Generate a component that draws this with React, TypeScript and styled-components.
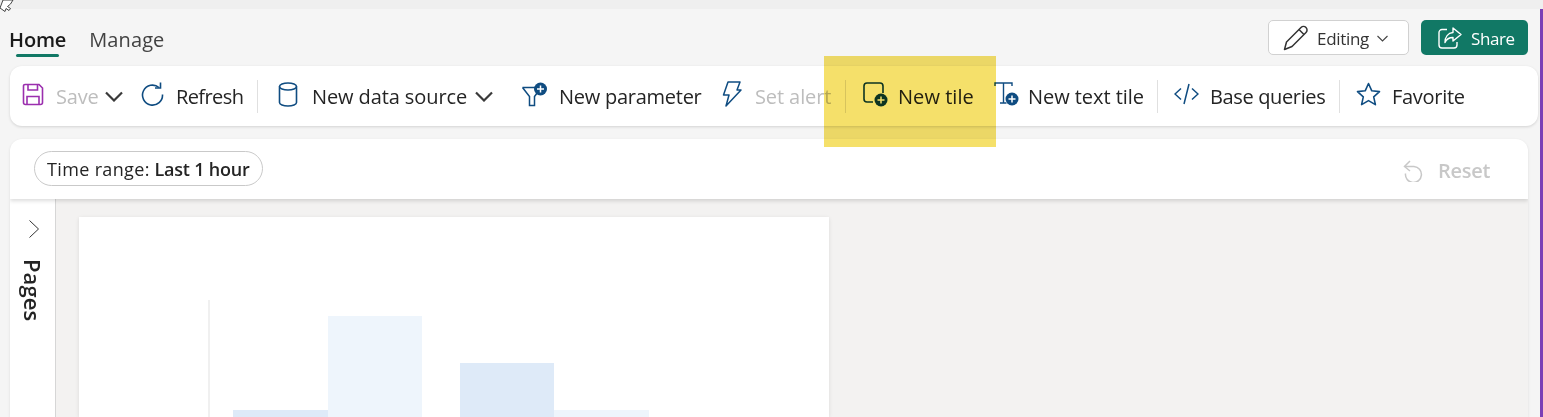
import React from 'react';
import styled, { createGlobalStyle } from 'styled-components';

const Global = createGlobalStyle`
    html, body {
        margin: 0;
        padding: 0;
        height: 100%;
        overflow: hidden;
    }
    body {
        font-family: "Open Sans", "Noto Sans", sans-serif;
    }
`;

const blue = '#0f4c81';

const SaveIcon = () => (
    <svg width="22" height="23" viewBox="0 0 22 23" fill="none" stroke="#9b2fae" strokeWidth="1.6">
        <path d="M3 1.5h14l3.5 3.500v14.500a2 2 0 0 1-2 2H3.500a2 2 0 0 1-2-2V3a1.500 1.500 0 0 1 1.500-1.500z" />
        <path d="M6 1.500v5.500h9.500V1.500M5 21.500v-8h12v8" />
    </svg>
);

const RefreshIcon = () => (
    <svg width="23" height="24" viewBox="0 0 23 24" fill="none" stroke={blue} strokeWidth="1.6">
        <path d="M18 5.500A10 10 0 1 0 21.500 12.500" />
        <path d="M19.500 0.500v5.500h-5.500" />
    </svg>
);

const DatabaseIcon = () => (
    <svg width="20" height="25" viewBox="0 0 20 25" fill="none" stroke={blue} strokeWidth="1.6">
        <ellipse cx="10" cy="4.500" rx="8.500" ry="3.500" />
        <path d="M1.500 4.500v16c0 2 3.800 3.500 8.500 3.500s8.500-1.500 8.500-3.500v-16" />
    </svg>
);

const FilterIcon = () => (
    <svg width="27" height="25" viewBox="0 0 27 25">
        <path d="M1.500 5.500h13M1.500 5.500l7 9v9h5v-9l3-4" fill="none" stroke={blue} strokeWidth="1.500" />
        <circle cx="19.500" cy="7" r="6.500" fill={blue} />
        <path d="M19.500 3.500v7M16 7h7" stroke="#fff" strokeWidth="1.500" />
    </svg>
);

const BoltIcon = () => (
    <svg width="20" height="26" viewBox="0 0 20 26" fill="none" stroke={blue} strokeWidth="1.500" strokeLinejoin="round">
        <path d="M6 1h12l-3 8h4L4 25l3-11H1.500z" />
    </svg>
);

const TileIcon = () => (
    <svg width="25" height="25" viewBox="0 0 25 25">
        <path d="M10 20H4a3 3 0 0 1-3-3V4a3 3 0 0 1 3-3h13a3 3 0 0 1 3 3v7" fill="none" stroke="#0d3b4f" strokeWidth="1.600" />
        <circle cx="18" cy="18" r="6.500" fill="#0d3b4f" />
        <path d="M18 14.500v7M14.500 18h7" stroke="#fff" strokeWidth="1.500" />
    </svg>
);

const TextTileIcon = () => (
    <svg width="25" height="24" viewBox="0 0 25 24">
        <path d="M1 4V1h17v3M9.500 1v20H6M9.500 21h3" fill="none" stroke={blue} strokeWidth="1.400" />
        <circle cx="18" cy="17" r="6.500" fill={blue} />
        <path d="M18 13.500v7M14.500 17h7" stroke="#fff" strokeWidth="1.500" />
    </svg>
);

const CodeIcon = () => (
    <svg width="25" height="22" viewBox="0 0 25 22" fill="none" stroke={blue} strokeWidth="1.500">
        <path d="M7 5.500L1 11l6 5.500M18 5.500l6 5.500-6 5.500M15 1l-5 20" />
    </svg>
);

const StarIcon = () => (
    <svg width="25" height="25" viewBox="0 0 25 25" fill="none" stroke={blue} strokeWidth="1.600" strokeLinejoin="round">
        <path d="M12.500 1.500l3.300 7.300 7.700.8-5.800 5.200 1.700 7.800-6.900-4-6.900 4 1.700-7.800L1.500 9.600l7.700-.8z" />
    </svg>
);

const PencilIcon = () => (
    <svg width="26" height="26" viewBox="0 0 26 26" fill="none" stroke="#333" strokeWidth="1.500" strokeLinejoin="round">
        <path d="M1.500 24.500l2-7.500L18 2.500a3 3 0 0 1 5 5L9 21.500z" />
        <path d="M16 4.500l5 5" />
    </svg>
);

const ShareIcon = () => (
    <svg width="24" height="22" viewBox="0 0 24 22" fill="none" stroke="#fff" strokeWidth="1.400" strokeLinejoin="round">
        <path d="M9 2.500H4a3 3 0 0 0-3 3V18a3 3 0 0 0 3 3h12a3 3 0 0 0 3-3v-3" />
        <path d="M15 1l8 6.500-8 6.500v-3.500c-4 0-6.500 1.500-8 5 0-5.500 3-9.500 8-10z" />
    </svg>
);

const ResetIcon = () => (
    <svg width="22" height="22" viewBox="0 0 22 22" fill="none" stroke="#c8c8c8" strokeWidth="1.500">
        <path d="M3 6.500h9a8 8 0 1 1-8.500 7" />
        <path d="M8 1L2.500 6.500 8 11" />
    </svg>
);

const CursorIcon = () => (
    <svg width="16" height="12" viewBox="0 0 16 12" fill="#fff" stroke="#333" strokeWidth="0.900">
        <path d="M0 8l5 3.500 1-3 3 2 1.500-2-3-2 3-2.500L13 0H3z" />
    </svg>
);

const CaretIcon = () => (
    <svg width="18" height="11" viewBox="0 0 18 11" fill="none" stroke="#3a3a3a" strokeWidth="2.200">
        <path d="M1 1.500l8 8 8-8" />
    </svg>
);

const SmallCaretIcon = () => (
    <svg width="11" height="7" viewBox="0 0 11 7" fill="none" stroke="#444" strokeWidth="1.100">
        <path d="M.5 1l5 5 5-5" />
    </svg>
);

const PanelCaretIcon = () => (
    <svg width="10" height="18" viewBox="0 0 10 18" fill="none" stroke="#333" strokeWidth="1">
        <path d="M.5.500L9.500 9 .5 17.500" />
    </svg>
);

const tools = [
    { icon: <SaveIcon />, label: 'Save', muted: true, caret: 6, left: 12, gap: 13, width: 42, track: -0.2 },
    { icon: <RefreshIcon />, label: 'Refresh', left: 18, gap: 13, width: 67, track: -0.6, sep: true },
    { icon: <DatabaseIcon />, label: 'New data source', caret: 8, left: 20, gap: 15, width: 154, track: -0.1 },
    { icon: <FilterIcon />, label: 'New parameter', left: 28, gap: 12, width: 142, track: -0.26 },
    { icon: <BoltIcon />, label: 'Set alert', muted: true, left: 20, gap: 14, width: 76, track: -0.1, sep: true },
    { icon: <TileIcon />, label: 'New tile', left: 17, gap: 11, width: 75, track: 0.05 },
    { icon: <TextTileIcon />, label: 'New text tile', left: 20, gap: 10, width: 115, track: -0.05, sep: true },
    { icon: <CodeIcon />, label: 'Base queries', left: 16, gap: 12, width: 115, track: -0.36, sep: true },
    { icon: <StarIcon />, label: 'Favorite', left: 16, gap: 12, width: 72, track: -0.3 },
];

const App = () => (
    <Page>
        <Global />
        <Pointer><CursorIcon /></Pointer>
        <TopStrip />
        <TabRow>
            <Tabs>
                <Tab $active $track={-0.15}>Home</Tab>
                <Tab $track={0.1}>Manage</Tab>
            </Tabs>
            <Actions>
                <EditingButton>
                    <PencilIcon />
                    <span>Editing</span>
                    <SmallCaretIcon />
                </EditingButton>
                <ShareButton>
                    <ShareIcon />
                    <span>Share</span>
                </ShareButton>
            </Actions>
        </TabRow>
        <Toolbar>
            {tools.map((t) => (
                <React.Fragment key={t.label}>
                    <Tool $left={t.left} $gap={t.gap}>
                        <IconSlot>{t.icon}</IconSlot>
                        <ToolLabel $muted={t.muted} $width={t.width} $track={t.track}>{t.label}</ToolLabel>
                    </Tool>
                    {t.caret && <Caret $left={t.caret}><CaretIcon /></Caret>}
                    {t.sep && <Separator />}
                </React.Fragment>
            ))}
        </Toolbar>
        <Card>
            <CardHeader>
                <TimePill><span>Time range:</span>&nbsp;<b>Last 1 hour</b></TimePill>
                <ResetButton>
                    <ResetIcon />
                    <span>Reset</span>
                </ResetButton>
            </CardHeader>
            <CardBody>
                <Sidebar>
                    <PanelCaretIcon />
                    <PagesLabel>Pages</PagesLabel>
                </Sidebar>
                <Canvas>
                    <Tile>
                        <Chart>
                            <Bar $h={7} $tone="#deeaf8" />
                            <Bar $h={101} $tone="#eef5fc" />
                            <BarGap />
                            <Bar $h={54} $tone="#deeaf8" />
                            <Bar $h={7} $tone="#eef5fc" />
                        </Chart>
                    </Tile>
                </Canvas>
            </CardBody>
        </Card>
        <Highlight />
        <EdgeLine />
    </Page>
);

export default App;

const Page = styled.div`
    position: relative;
    width: 1543px;
    height: 417px;
    overflow: hidden;
    background: #f5f5f5;
    color: #242424;
`;

const Pointer = styled.div`
    position: absolute;
    top: 0;
    left: 0;
    line-height: 0;
`;

const TopStrip = styled.div`
    height: 9px;
    background: #efefef;
`;

const TabRow = styled.div`
    display: flex;
    justify-content: space-between;
    align-items: flex-start;
    height: 57px;
    padding: 11px 15px 0 9px;
    box-sizing: border-box;
`;

const Tabs = styled.div`
    display: flex;
    gap: 23px;
    padding-top: 6px;
`;

const Tab = styled.div<{ $active?: boolean; $track: number }>`
    position: relative;
    height: 31px;
    font-size: 20px;
    line-height: 28px;
    letter-spacing: ${(p) => p.$track}px;
    font-weight: ${(p) => (p.$active ? 600 : 400)};
    color: ${(p) => (p.$active ? '#1a1a1a' : '#424242')};

    &::after {
        content: '';
        display: ${(p) => (p.$active ? 'block' : 'none')};
        position: absolute;
        left: 7px;
        right: 7px;
        bottom: 0;
        height: 3px;
        border-radius: 2px;
        background: #117865;
    }
`;

const Actions = styled.div`
    display: flex;
    gap: 12px;
`;

const EditingButton = styled.div`
    display: flex;
    align-items: center;
    box-sizing: border-box;
    width: 141px;
    height: 35px;
    padding-left: 14px;
    gap: 8px;
    background: #fff;
    border: 1px solid #d1d1d1;
    border-radius: 5px;
    font-size: 17px;
    letter-spacing: -0.3px;
    color: #333;

    svg:last-child {
        margin-top: 2px;
    }

    span {
        margin-top: 1px;
    }
`;

const ShareButton = styled.div`
    display: flex;
    align-items: center;
    box-sizing: border-box;
    width: 107px;
    height: 35px;
    padding-left: 17px;
    gap: 9px;
    background: #117865;
    border-radius: 5px;
    font-size: 17px;
    letter-spacing: -0.4px;
    color: #fff;

    span {
        margin-top: 1px;
    }
`;

const Toolbar = styled.div`
    display: flex;
    align-items: center;
    height: 60px;
    margin: 0 5px 0 10px;
    background: #fff;
    border-radius: 12px;
    box-shadow: 0 1px 3px rgba(0, 0, 0, 0.14);
`;

const Tool = styled.div<{ $left: number; $gap: number }>`
    display: flex;
    align-items: center;
    margin-left: ${(p) => p.$left}px;
    gap: ${(p) => p.$gap}px;
`;

const IconSlot = styled.span`
    display: flex;
    margin-top: -4px;
`;

const ToolLabel = styled.span<{ $muted?: boolean; $width: number; $track: number }>`
    width: ${(p) => p.$width + 1}px;
    margin-top: 2px;
    margin-left: -1px;
    font-size: 20px;
    line-height: 28px;
    letter-spacing: ${(p) => p.$track}px;
    white-space: nowrap;
    color: ${(p) => (p.$muted ? '#bdbdbd' : '#242424')};
`;

const Caret = styled.span<{ $left: number }>`
    display: flex;
    margin-left: ${(p) => p.$left}px;
    margin-top: 1px;
`;

const Separator = styled.div`
    width: 1px;
    height: 33px;
    margin-left: 13px;
    background: #e0e0e0;
`;

const Card = styled.div`
    margin: 13px 15px 0 10px;
    background: #fff;
    border-radius: 12px 12px 0 0;
    box-shadow: 0 1px 3px rgba(0, 0, 0, 0.1);
    overflow: hidden;
`;

const CardHeader = styled.div`
    position: relative;
    display: flex;
    justify-content: space-between;
    align-items: center;
    height: 60px;
    padding: 0 38px 0 24px;
    box-sizing: border-box;
    box-shadow: 0 2px 4px rgba(0, 0, 0, 0.14);
`;

const TimePill = styled.div`
    display: flex;
    align-items: center;
    height: 35px;
    padding: 0 12px;
    box-sizing: border-box;
    border: 1px solid #c9c9c9;
    border-radius: 18px;
    font-size: 18px;
    margin-top: -1px;

    span {
        letter-spacing: 0.35px;
    }

    b {
        font-weight: 600;
        letter-spacing: -0.2px;
    }
`;

const ResetButton = styled.div`
    display: flex;
    align-items: center;
    gap: 14px;
    margin-top: 3px;
    font-size: 20px;
    font-weight: 600;
    letter-spacing: -0.3px;
    color: #c8c8c8;
`;

const CardBody = styled.div`
    display: flex;
    height: 218px;
`;

const Sidebar = styled.div`
    display: flex;
    flex-direction: column;
    align-items: center;
    box-sizing: border-box;
    width: 46px;
    padding: 21px 0 0 2px;
    border-right: 1px solid #d6d6d6;
    background: #fff;

    svg {
        margin-right: 0;
    }
`;

const PagesLabel = styled.div`
    margin-top: 21px;
    margin-right: 1px;
    writing-mode: vertical-rl;
    font-size: 22px;
    font-weight: 600;
    line-height: 24px;
    letter-spacing: 0.1px;
    color: #242424;
`;

const Canvas = styled.div`
    flex: 1;
    padding: 18px 0 0 23px;
    background: #f3f2f1;
`;

const Tile = styled.div`
    display: flex;
    align-items: flex-end;
    width: 750px;
    height: 200px;
    box-sizing: border-box;
    padding-left: 129px;
    background: #fff;
    box-shadow: 0 1px 4px rgba(0, 0, 0, 0.1);
`;

const Chart = styled.div`
    display: flex;
    align-items: flex-end;
    height: 117px;
    padding-left: 23px;
    border-left: 2px solid #f0f0f0;
`;

const Bar = styled.div<{ $h: number; $tone: string }>`
    width: 94.5px;
    height: ${(p) => p.$h}px;
    background: ${(p) => p.$tone};
`;

const BarGap = styled.div`
    width: 37.5px;
`;

const Highlight = styled.div`
    position: absolute;
    left: 824px;
    top: 56px;
    width: 172px;
    height: 91px;
    background: #f5e06a;
    mix-blend-mode: multiply;
`;

const EdgeLine = styled.div`
    position: absolute;
    top: 9px;
    right: 0;
    bottom: 0;
    width: 3px;
    background: #7b3fb5;
`;
